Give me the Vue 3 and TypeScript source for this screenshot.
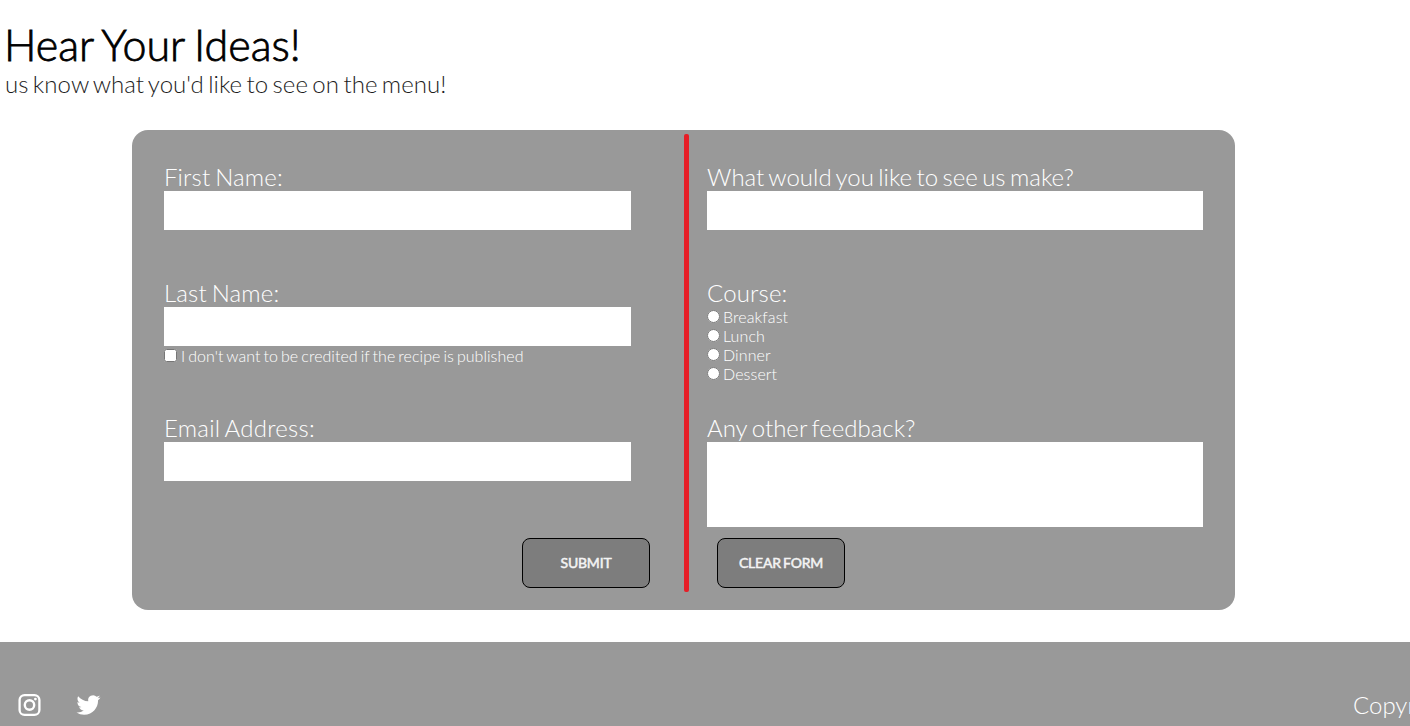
<script setup lang="ts">
import { ref } from 'vue'

const courses: string[] = ['Breakfast', 'Lunch', 'Dinner', 'Dessert']
const firstName = ref('')
const lastName = ref('')
const email = ref('')
const anonymous = ref(false)
const dish = ref('')
const course = ref('')
const feedback = ref('')

function clearForm(): void {
  firstName.value = ''
  lastName.value = ''
  email.value = ''
  anonymous.value = false
  dish.value = ''
  course.value = ''
  feedback.value = ''
}
</script>

<template>
  <div class="page">
    <header class="intro">
      <h1>Hear Your Ideas!</h1>
      <p>us know what you'd like to see on the menu!</p>
    </header>

    <form class="card" @submit.prevent>
      <div class="column left">
        <div class="field first">
          <label for="first">First Name:</label>
          <input id="first" v-model="firstName" class="box" type="text" />
        </div>
        <div class="field second">
          <label for="last">Last Name:</label>
          <input id="last" v-model="lastName" class="box" type="text" />
          <label class="option"><input v-model="anonymous" type="checkbox" /><span class="credit">I don't want to be credited if the recipe is published</span></label>
        </div>
        <div class="field third">
          <label for="email" class="email">Email Address:</label>
          <input id="email" v-model="email" class="box" type="text" />
        </div>
        <button class="submit" type="submit">SUBMIT</button>
      </div>

      <div class="divider"></div>

      <div class="column right">
        <div class="field first">
          <label for="dish" class="dish">What would you like to see us make?</label>
          <input id="dish" v-model="dish" class="box" type="text" />
        </div>
        <div class="field second">
          <span class="caption">Course:</span>
          <label v-for="name in courses" :key="name" class="option">
            <input v-model="course" type="radio" name="course" :value="name" /><span>{{ name }}</span>
          </label>
        </div>
        <div class="field third">
          <label for="feedback" class="feedback">Any other feedback?</label>
          <textarea id="feedback" v-model="feedback" class="box"></textarea>
        </div>
        <button class="clear" type="button" @click="clearForm">CLEAR FORM</button>
      </div>
    </form>

    <footer class="footer">
      <nav class="social">
        <a aria-label="Instagram">
          <svg class="instagram" viewBox="0 0 24 24" fill="none" stroke="#fff">
            <rect x="2.1" y="2.1" width="19.8" height="19.8" rx="5" stroke-width="2.3" />
            <circle cx="12" cy="12" r="4.7" stroke-width="2.4" />
            <circle cx="17.9" cy="6.1" r="1.4" fill="#fff" stroke="none" />
          </svg>
        </a>
        <a aria-label="Twitter">
          <svg class="twitter" viewBox="0 0 24 24" fill="#fff">
            <path d="M23.953 4.57a10 10 0 01-2.825.775 4.958 4.958 0 002.163-2.723c-.951.555-2.005.959-3.127 1.184a4.92 4.92 0 00-8.384 4.482C7.69 8.095 4.067 6.13 1.64 3.162a4.822 4.822 0 00-.666 2.475c0 1.71.87 3.213 2.188 4.096a4.904 4.904 0 01-2.228-.616v.06a4.923 4.923 0 003.946 4.827 4.996 4.996 0 01-2.212.085 4.936 4.936 0 004.604 3.417 9.867 9.867 0 01-6.102 2.105c-.39 0-.779-.023-1.17-.067a13.995 13.995 0 007.557 2.209c9.053 0 13.998-7.496 13.998-13.985 0-.21 0-.42-.015-.63A9.935 9.935 0 0024 4.59z" />
          </svg>
        </a>
      </nav>
      <span class="copyright">Copyright</span>
    </footer>
  </div>
</template>

<style>
body {
  margin: 0;
  overflow: hidden;
}
</style>

<style scoped>
.page {
  box-sizing: border-box;
  width: 100%;
  height: 726px;
  overflow: hidden;
  padding-top: 19px;
  background: #fff;
  font-family: Lato, sans-serif;
  font-weight: 300;
}
.intro {
  height: 111px;
  padding-left: 5px;
  color: #000;
}
h1 {
  margin: 0 0 0 -1px;
  font-size: 43px;
  line-height: 51px;
  font-weight: 300;
  -webkit-text-stroke: 0.8px #000;
  word-spacing: -2px;
}
p {
  margin: -1px 0 0;
  font-size: 24px;
  line-height: 29px;
  letter-spacing: 0.05px;
  word-spacing: -2.2px;
  color: #1c1c1c;
}
.card {
  box-sizing: border-box;
  display: flex;
  width: 1103px;
  height: 480px;
  margin-left: 132px;
  padding: 4px 32px 0;
  border-radius: 16px;
  background: #999;
  color: #fff;
}
.column {
  display: flex;
  flex-direction: column;
  padding-top: 28px;
}
.left {
  width: 486px;
  margin-right: 34px;
}
.left .field {
  width: 467px;
}
.right {
  width: 496px;
  margin-left: 18px;
}
.divider {
  width: 5px;
  height: 458px;
  border-radius: 2px;
  background: #e61e27;
}
.field {
  display: flex;
  flex-direction: column;
  font-size: 24px;
  line-height: 29px;
  letter-spacing: 0.15px;
  word-spacing: -1.8px;
}
.email {
  letter-spacing: 0.25px;
}
.dish {
  letter-spacing: 0.03px;
  word-spacing: -2.2px;
}
.feedback {
  letter-spacing: 0;
}
.first {
  height: 116px;
}
.second {
  height: 135px;
}
.third {
  height: 125px;
}
.box {
  box-sizing: border-box;
  width: 100%;
  height: 39px;
  margin: 0;
  padding: 4px 8px;
  border: 0;
  border-radius: 0;
  background: #fff;
  font: inherit;
}
textarea.box {
  height: 85px;
  resize: none;
}
.option {
  display: flex;
  height: 19px;
  font-size: 16px;
  line-height: 19px;
  letter-spacing: 0.1px;
}
.option input {
  width: 13px;
  height: 13px;
  margin: 3px 3px 0 0;
}
.credit {
  padding-left: 1px;
  letter-spacing: 0.03px;
  word-spacing: -1.3px;
}
button {
  box-sizing: border-box;
  width: 128px;
  height: 50px;
  padding: 0 0 1px;
  border: 1px solid #000;
  border-radius: 8px;
  background: #7d7d7d;
  color: #f4f4f4;
  font-family: inherit;
  font-size: 14px;
  font-weight: 400;
  -webkit-text-stroke: 0.5px #f4f4f4;
  letter-spacing: -0.2px;
}
.submit {
  align-self: flex-end;
}
.clear {
  margin-left: 10px;
  word-spacing: -1.2px;
}
.footer {
  display: flex;
  justify-content: space-between;
  height: 84px;
  margin-top: 32px;
  background: #999;
  color: #fff;
}
.social {
  display: flex;
  gap: 33.5px;
  padding: 51px 0 0 17px;
}
.instagram,
.twitter {
  display: block;
  width: 25px;
  height: 24px;
}
.copyright {
  width: 57px;
  padding-top: 48px;
  overflow: hidden;
  font-size: 24px;
  line-height: 29px;
}
</style>
